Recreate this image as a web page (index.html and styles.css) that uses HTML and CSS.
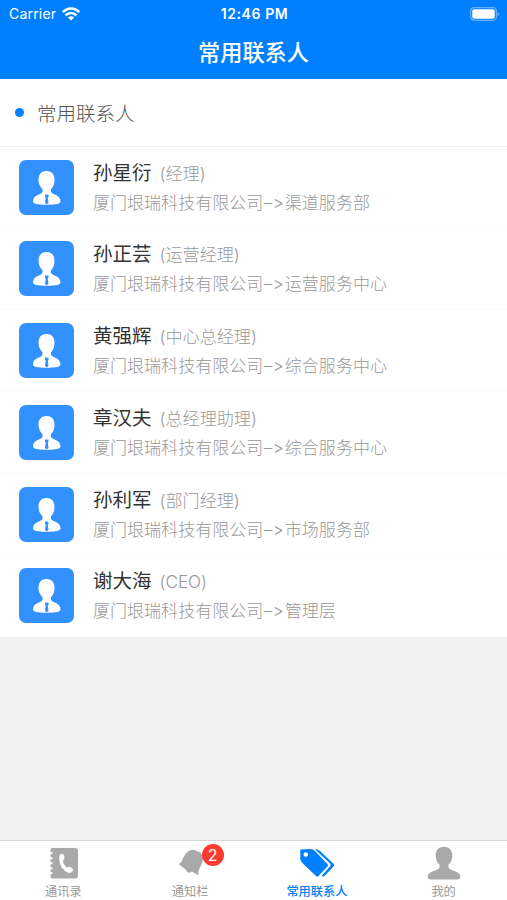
FILE: index.html
```html
<!DOCTYPE html>
<html lang="zh-CN">
<head>
  <meta charset="utf-8">
  <title>常用联系人</title>
  <link rel="stylesheet" href="styles.css">
</head>
<body>
  <svg class="defs" width="0" height="0">
    <symbol id="person" viewBox="0 0 55 55">
      <path fill="#fff" d="M27.500 11C22.500 11 19.500 14.300 19.500 19.500C19.500 23.500 21 27 23.500 29.200V31.800C22 35.500 14 34.500 14 41.500C14 43.500 18 44.800 27.800 44.800S41.500 43.500 41.500 41.500C41.500 34.500 33.500 35.500 32 31.800V29.200C34.500 27 35.500 23.500 35.500 19.500C35.500 14.300 32.500 11 27.500 11Z"/>
      <path fill="#3390ff" d="M26 34.500h3.500v2.200l-.7 1 .7 5.300-1.700 1.300-1.800-1.300.7-5.300-.7-1z"/>
    </symbol>
  </svg>
  <header>
    <div class="status">
      <span class="carrier">Carrier
        <svg width="18" height="14" viewBox="0 0 18 14" fill="none" stroke="#fff" stroke-width="2.500">
          <path d="M.8 5.200C5.500.4 12.500.4 17.200 5.200M3.600 8.300C6.800 5.100 11.200 5.100 14.400 8.300"/>
          <path d="M9 13.500L5.900 10.600C7.700 8.900 10.300 8.900 12.100 10.600Z" fill="#fff" stroke="none"/>
        </svg>
      </span>
      <span class="time">12:46 PM</span>
      <span class="battery">
        <svg width="30" height="14" viewBox="0 0 30 14">
          <rect x=".7" y=".7" width="25.600" height="12.600" rx="3.500" fill="none" stroke="#66b3ff" stroke-width="1.200"/>
          <rect x="2.300" y="2.300" width="22.400" height="9.400" rx="2" fill="#fff"/>
          <path d="M27.500 5v4.500q1.700-.7 1.700-2.250T27.500 5" fill="#66b3ff"/>
        </svg>
      </span>
    </div>
    <h1>常用联系人</h1>
  </header>
  <main>
    <h2><i class="dot"></i>常用联系人</h2>
    <ul class="contacts">
      <li>
        <svg class="avatar"><use href="#person"/></svg>
        <div>
          <p class="name">孙星衍<span>(经理)</span></p>
          <p class="dept">厦门垠瑞科技有限公司<b>–&gt;</b>渠道服务部</p>
        </div>
      </li>
      <li>
        <svg class="avatar"><use href="#person"/></svg>
        <div>
          <p class="name">孙正芸<span>(运营经理)</span></p>
          <p class="dept">厦门垠瑞科技有限公司<b>–&gt;</b>运营服务中心</p>
        </div>
      </li>
      <li>
        <svg class="avatar"><use href="#person"/></svg>
        <div>
          <p class="name">黄强辉<span>(中心总经理)</span></p>
          <p class="dept">厦门垠瑞科技有限公司<b>–&gt;</b>综合服务中心</p>
        </div>
      </li>
      <li>
        <svg class="avatar"><use href="#person"/></svg>
        <div>
          <p class="name">章汉夫<span>(总经理助理)</span></p>
          <p class="dept">厦门垠瑞科技有限公司<b>–&gt;</b>综合服务中心</p>
        </div>
      </li>
      <li>
        <svg class="avatar"><use href="#person"/></svg>
        <div>
          <p class="name">孙利军<span>(部门经理)</span></p>
          <p class="dept">厦门垠瑞科技有限公司<b>–&gt;</b>市场服务部</p>
        </div>
      </li>
      <li>
        <svg class="avatar"><use href="#person"/></svg>
        <div>
          <p class="name">谢大海<span>(CEO)</span></p>
          <p class="dept">厦门垠瑞科技有限公司<b>–&gt;</b>管理层</p>
        </div>
      </li>
    </ul>
  </main>
  <nav>
    <a class="tab">
      <svg width="36" height="36" viewBox="0 0 36 36">
        <path fill="#a9a9a9" d="M7.500 3H30q3 0 3 3v24.500q0 3-3 3H7.500q-2 0-2-2v-2.200h2v-2h-2v-3h2v-2h-2v-3h2v-2h-2v-3h2v-2h-2v-3h2v-2h-2V5q0-2 2-2z"/>
        <path fill="#fff" d="M15.500 9.200C17.500 8 19 9 19.300 11.500C19.600 13.700 19.200 14.800 17.800 15.500C18.200 18.500 19.800 21 22 22.600C23.500 21.300 25 21.500 26.800 22.900C28.500 24.300 28.300 26 26.600 27.200C24.300 28.900 20.500 27.400 17.600 23.600C14.500 19.500 13 11.200 15.500 9.200Z"/>
      </svg>
      <span>通讯录</span>
    </a>
    <a class="tab">
      <svg width="36" height="36" viewBox="0 0 36 36" fill="#a9a9a9">
        <path d="M6.800 19.200C11.500 17 10.500 9.500 17 6C20 4.400 22.500 4.500 25 6.300C29.500 7.500 31.500 11 30.800 15.500C30 20.500 25.500 24 26.600 30.300L19.700 26.400Q15.500 29.500 14 24.800Z"/>
      </svg>
      <em class="badge">2</em>
      <span>通知栏</span>
    </a>
    <a class="tab active">
      <svg width="36" height="36" viewBox="0 0 36 36">
        <path fill="#0080ff" fill-rule="evenodd" d="M1.500 4.500L11.500 4Q14 4 16 6L28.500 19Q29.700 20.300 28.500 21.500L19.500 31Q18.300 32 17 31L3.800 18.500Q1.500 16.300 1.300 14V6Q.8 4.800 1.500 4.500ZM6.800 7.200A2.300 2.300 0 1 0 6.800 11.800A2.300 2.300 0 1 0 6.800 7.200Z"/>
        <path fill="#0080ff" d="M16 4.200Q19 4 21 6L34.500 18.800Q35.700 20.300 34.500 21.500L26 30.500Q24.500 32.200 22.500 31L31.500 20.800Q32.200 20 31.500 19Z"/>
      </svg>
      <span>常用联系人</span>
    </a>
    <a class="tab">
      <svg width="36" height="36" viewBox="0 0 36 36" fill="#a9a9a9">
        <path d="M18 1.800C12.600 1.800 9.700 5.500 9.700 10.600C9.700 14.500 11 17.600 13.500 19.800V22.500C12 26.500 1.700 25.500 1.700 31.800Q1.700 34.500 5 34.500H31Q34.300 34.500 34.300 31.800C34.300 25.500 24 26.500 22.500 22.500V19.800C25 17.600 26.300 14.500 26.300 10.600C26.300 5.500 23.400 1.800 18 1.800Z"/>
      </svg>
      <span>我的</span>
    </a>
  </nav>
</body>
</html>
```
FILE: styles.css
```css
* {
  box-sizing: border-box;
  margin: 0;
  padding: 0;
}
body {
  display: flex;
  flex-direction: column;
  height: 900px;
  overflow: hidden;
  background-color: #f0f0f0;
  font-family: Inter, 'Noto Sans CJK SC', sans-serif;
  font-feature-settings: "calt" 0;
}
.defs {
  position: absolute;
}
header {
  height: 79px;
  background-color: #0080ff;
  color: white;
}
.status {
  display: grid;
  grid-template-columns: 1fr auto 1fr;
  align-items: center;
  height: 27px;
  padding: 0 7px 0 9px;
  font-size: 14px;
  line-height: 27px;
}
.carrier {
  display: flex;
  align-items: center;
  gap: 6px;
  letter-spacing: 0.2px;
}
.time {
  font-size: 14px;
  font-weight: 600;
  letter-spacing: 0.6px;
}
.battery {
  display: flex;
  justify-content: flex-end;
}
h1 {
  font-size: 22.200px;
  font-weight: 500;
  line-height: 51px;
  text-align: center;
}
main {
  background-color: white;
}
h2 {
  display: flex;
  align-items: center;
  height: 67.800px;
  padding-left: 15px;
  border-bottom: 1px solid #f0f0f0;
  color: #555;
  font-size: 19.500px;
  font-weight: 300;
}
.dot {
  width: 9px;
  height: 9px;
  margin-right: 13px;
  border-radius: 50%;
  background-color: #0080ff;
}
.contacts {
  list-style: none;
}
.contacts li {
  display: flex;
  align-items: center;
  gap: 19px;
  height: 81.750px;
  padding-left: 19px;
  border-bottom: 1px solid #fbfbfb;
}
.avatar {
  width: 55px;
  height: 55px;
  border-radius: 7px;
  background-color: #3390ff;
}
.name {
  padding-top: 1px;
  color: #333;
  font-size: 19.500px;
  line-height: 29px;
}
.name span {
  margin-left: 8px;
  color: #999;
  font-size: 17.100px;
  font-weight: 300;
}
.dept {
  color: #999;
  font-size: 17.050px;
  font-weight: 300;
  line-height: 29px;
}
.dept b {
  display: inline-block;
  width: 21.500px;
  font-weight: 300;
  letter-spacing: 0.5px;
  text-align: center;
}
nav {
  display: grid;
  grid-template-columns: repeat(4, 1fr);
  height: 60px;
  margin-top: auto;
  border-top: 1px solid #d5d5d5;
  background-color: white;
}
.tab {
  position: relative;
  display: flex;
  flex-direction: column;
  align-items: center;
  padding-top: 4px;
  color: #999;
  font-size: 12.200px;
  line-height: 21px;
}
.active {
  color: #0080ff;
  font-weight: 500;
}
.badge {
  position: absolute;
  top: 3px;
  left: 75px;
  width: 22px;
  height: 22px;
  border-radius: 50%;
  background-color: #ff3b30;
  color: white;
  font-size: 16px;
  font-style: normal;
  line-height: 22px;
  text-align: center;
}
```
